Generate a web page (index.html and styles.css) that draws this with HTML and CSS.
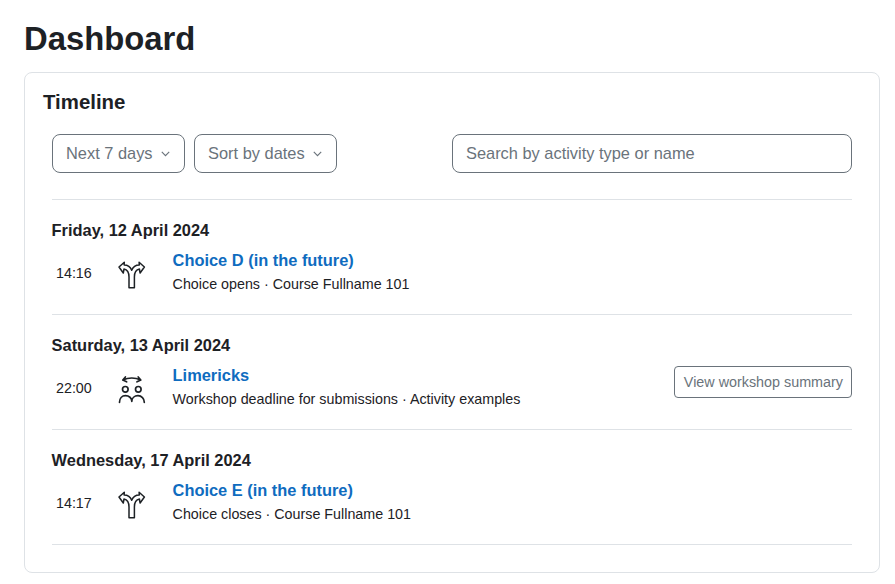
FILE: index.html
```html
<!DOCTYPE html>
<html lang="en">
<head>
<meta charset="utf-8">
<title>Dashboard</title>
<link rel="stylesheet" href="styles.css">
</head>
<body>
<h1 class="title">Dashboard</h1>
<section class="card">
  <h2 class="card-title">Timeline</h2>
  <div class="filters">
    <div class="filter-buttons">
      <button class="select">Next 7 days<svg class="chev" viewBox="0 0 8 5"><path d="M.7.7 4 4 7.300.7"/></svg></button>
      <button class="select">Sort by dates<svg class="chev" viewBox="0 0 8 5"><path d="M.7.7 4 4 7.300.7"/></svg></button>
    </div>
    <input class="search" type="text" placeholder="Search by activity type or name">
  </div>
  <div class="group">
    <h3 class="date">Friday, 12 April 2024</h3>
    <div class="event">
      <span class="time">14:16</span>
      <svg class="icon" viewBox="0 0 30 30"><path d="M12 28.700V18C12 13.500 10.500 10.500 7 9.900L6.300 14 2 8 7.300 3.300 7.100 5.900C10.500 5.900 13.500 8 14.700 11.300 15.900 8 18.900 5.900 22.300 5.900L22.100 3.300 27.400 8 23.100 14 22.400 9.900C18.900 10.500 17.400 13.500 17.400 18V28.700Z"/></svg>
      <div class="info">
        <a class="name" href="#">Choice D (in the future)</a>
        <div class="meta">Choice opens · Course Fullname 101</div>
      </div>
    </div>
  </div>
  <div class="group">
    <h3 class="date">Saturday, 13 April 2024</h3>
    <div class="event">
      <span class="time">22:00</span>
      <svg class="icon icon-bold" viewBox="0 0 30 30"><path d="M5.800 6Q14.800 2 23.800 6M8.400 3 5.800 6 9.600 7.800M21.200 3 23.800 6 20 7.800"/><circle cx="8.300" cy="15.300" r="2.800"/><circle cx="21.300" cy="15.300" r="2.800"/><path d="M2.500 28.300C2.500 24.500 5 21.700 8.500 21.700 12 21.700 14.800 24 14.800 27.300 14.800 24 17.500 21.700 21 21.700 24.500 21.700 27.300 24.500 27.300 28.300"/></svg>
      <div class="info">
        <a class="name" href="#">Limericks</a>
        <div class="meta">Workshop deadline for submissions · Activity examples</div>
      </div>
      <button class="action">View workshop summary</button>
    </div>
  </div>
  <div class="group">
    <h3 class="date">Wednesday, 17 April 2024</h3>
    <div class="event">
      <span class="time">14:17</span>
      <svg class="icon" viewBox="0 0 30 30"><path d="M12 28.700V18C12 13.500 10.500 10.500 7 9.900L6.300 14 2 8 7.300 3.300 7.100 5.900C10.500 5.900 13.500 8 14.700 11.300 15.900 8 18.900 5.900 22.300 5.900L22.100 3.300 27.400 8 23.100 14 22.400 9.900C18.900 10.500 17.400 13.500 17.400 18V28.700Z"/></svg>
      <div class="info">
        <a class="name" href="#">Choice E (in the future)</a>
        <div class="meta">Choice closes · Course Fullname 101</div>
      </div>
    </div>
  </div>
</section>
</body>
</html>
```
FILE: styles.css
```css
* { box-sizing: border-box; }
html, body { margin: 0; background: #fff; }
body {
  padding: 0 15px 0 24px;
  font-family: "Liberation Sans", Arial, sans-serif;
  color: #1d2125;
  font-size: 14.3px;
  height: 584px;
  overflow: hidden;
}
.title {
  margin: 0;
  padding-top: 19px;
  height: 72px;
  font-size: 32.8px;
  line-height: 40px;
  font-weight: 700;
}
.card {
  height: 501px;
  border: 1px solid #dee2e6;
  border-radius: 8px;
  padding: 17px 27px 0 18px;
}
.card-title {
  margin: 0;
  font-size: 20.4px;
  line-height: 24px;
  font-weight: 700;
}
.filters {
  display: flex;
  justify-content: space-between;
  margin: 20px 0 0 9px;
  padding-bottom: 26px;
  border-bottom: 1px solid #dee2e6;
}
.filter-buttons { display: flex; gap: 9px; }
.select {
  display: flex;
  align-items: center;
  gap: 8px;
  height: 39px;
  padding: 0 14.5px 0 13px;
  background: #fff;
  border: 1px solid #6a737b;
  border-radius: 8px;
  color: #6a737b;
  font: 16.4px "Liberation Sans", Arial, sans-serif;
}
.chev { width: 9px; height: 6px; fill: none; stroke: #6a737b; stroke-width: 1; }
.search {
  width: 400px;
  height: 39px;
  padding: 0 13px;
  border: 1px solid #6a737b;
  border-radius: 8px;
  font: 16.4px "Liberation Sans", Arial, sans-serif;
  color: #6a737b;
}
.search::placeholder { color: #6a737b; opacity: 1; }
.group {
  margin-left: 9px;
  height: 115px;
  border-bottom: 1px solid #dee2e6;
  padding-top: 21px;
}
.date {
  margin: 0 0 0 -0.4px;
  font-size: 16.4px;
  line-height: 19px;
  font-weight: 700;
}
.event {
  display: flex;
  align-items: center;
  height: 48px;
  margin-top: 9px;
}
.time {
  width: 65px;
  padding-left: 4px;
}
.icon {
  width: 30px;
  height: 30px;
  margin-top: 2px;
  fill: none;
  stroke: #1d2125;
  stroke-width: 1.5;
  stroke-linejoin: round;
  stroke-linecap: round;
  flex: none;
}
.icon-bold { stroke-width: 1.7; }
.info {
  flex: 1;
  align-self: flex-start;
  margin: 1px 0 0 25.6px;
}
.name {
  display: block;
  color: #0f6cbf;
  font-size: 16.4px;
  line-height: 20px;
  font-weight: 700;
  text-decoration: none;
}
.meta {
  margin-top: 6px;
  line-height: 17px;
}
.action {
  align-self: flex-start;
  height: 32px;
  margin-top: 2px;
  padding: 0 8px 0 9px;
  background: #fff;
  border: 1px solid #6a737b;
  border-radius: 4px;
  color: #6a737b;
  font: 14.35px "Liberation Sans", Arial, sans-serif;
}
```
